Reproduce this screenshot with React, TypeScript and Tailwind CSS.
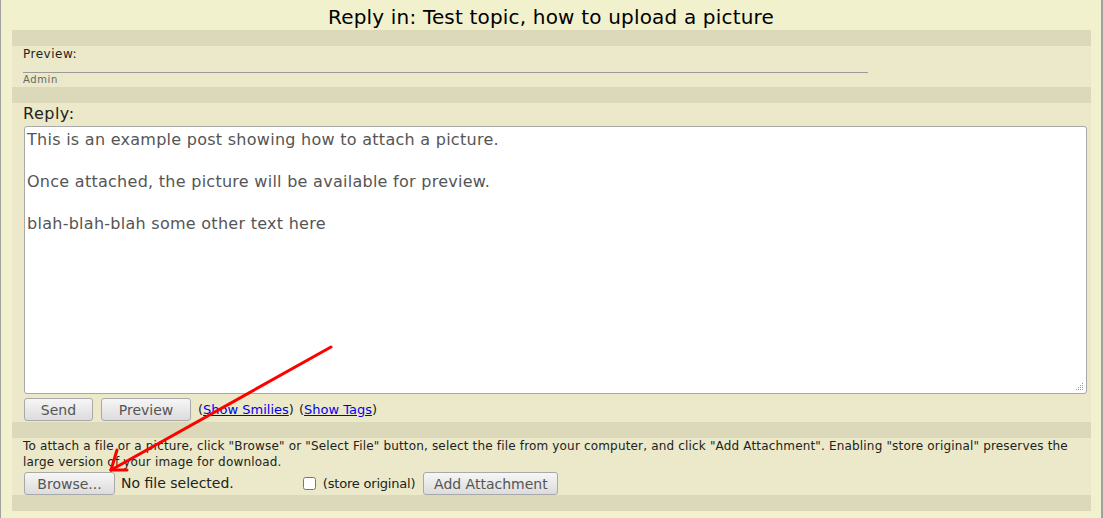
import React from 'react';

const font = { fontFamily: '"DejaVu Sans", Verdana, sans-serif' };

function Stripe() {
  return <div className="h-[16px] bg-[#dbd9b9]" />;
}

function Btn({ children, className = '' }: { children: React.ReactNode; className?: string }) {
  return (
    <button
      type="button"
      className={`h-[23px] rounded-[3px] border border-[#a9a9a9] bg-gradient-to-b from-[#f6f6f6] to-[#dcdcdc] text-[14px] leading-none text-[#555] ${className}`}
    >
      {children}
    </button>
  );
}

export default function App() {
  return (
    <div
      style={font}
      className="relative h-[518px] w-full overflow-hidden border-l border-r-2 border-[#a0a0a0] bg-[#f2f1ce] text-[#111]"
    >
      {/* title */}
      <div className="flex h-[30px] items-center justify-center pt-[3px] text-[20px] leading-none tracking-[0.18px] text-black">
        Reply in: Test topic, how to upload a picture
      </div>

      <div className="ml-[11px] mr-[10px] bg-[#ebe9c9]">
        <Stripe />

        {/* preview */}
        <div className="h-[41px] pl-[11px]">
          <div className="text-[12px] leading-[17px] tracking-[0.5px] text-[#222]">Preview:</div>
          <div className="mt-[9px] h-px w-[845px] bg-[#9a9a9a]" />
          <div className="text-[10px] leading-[13px] tracking-[0.6px] text-[#666]">Admin</div>
        </div>

        <Stripe />

        {/* reply */}
        <div className="h-[319px] pl-[11px]">
          <div className="text-[16px] leading-[21px] tracking-[0.5px] text-[#222]">Reply:</div>
          <div className="relative ml-px mt-[2px] h-[268px] w-[1063px] rounded-[3px] border border-[#a8a8a8] bg-white px-[2px] pt-[2px] text-[16px] leading-[21px] tracking-[0.27px] text-[#555]">
            <p>This is an example post showing how to attach a picture.</p>
            <p className="mt-[21px]">Once attached, the picture will be available for preview.</p>
            <p className="mt-[21px]">blah-blah-blah some other text here</p>
            <svg className="absolute bottom-[2px] right-[2px]" width="8" height="8" viewBox="0 0 8 8">
              {[
                [6, 0],
                [4, 2],
                [6, 2],
                [2, 4],
                [4, 4],
                [6, 4],
                [0, 6],
                [2, 6],
                [4, 6],
                [6, 6],
              ].map(([x, y]) => (
                <rect key={`${x}-${y}`} x={x} y={y} width="1" height="1" fill="#999" />
              ))}
            </svg>
          </div>
          <div className="mt-[4px] flex items-center text-[13px]">
            <Btn className="ml-px w-[69px]">Send</Btn>
            <Btn className="ml-[8px] w-[90px]">Preview</Btn>
            <span className="ml-[7px] text-[#222]">
              (<a className="text-[#0000ee] underline">Show Smilies</a>)
            </span>
            <span className="ml-[5px] text-[#222]">
              (<a className="text-[#0000ee] underline">Show Tags</a>)
            </span>
          </div>
        </div>

        <Stripe />

        {/* attachment */}
        <div className="h-[57px] pl-[11px] pr-[10px]">
          <div className="text-[12px] leading-[16px] tracking-[0.17px] text-[#222]">
            To attach a file or a picture, click "Browse" or "Select File" button, select the file from your computer, and click "Add Attachment". Enabling "store original" preserves the large version of your image for download.
          </div>
          <div className="mt-[2px] flex items-center">
            <Btn className="ml-px h-[22px] w-[91px]">Browse...</Btn>
            <span className="ml-[6px] text-[14px] text-[#222]">No file selected.</span>
            <input type="checkbox" className="ml-[69px] h-[13px] w-[13px]" />
            <span className="ml-[7px] text-[13px] tracking-[-0.2px] text-[#222]">(store original)</span>
            <Btn className="ml-[8px] h-[22px] w-[135px]">Add Attachment</Btn>
          </div>
        </div>

        <Stripe />
      </div>

      {/* annotation arrow */}
      <svg className="pointer-events-none absolute left-0 top-0" width="1103" height="518">
        <g stroke="#ff0000" strokeWidth="3" fill="none" strokeLinecap="round">
          <line x1="330" y1="347" x2="110" y2="470" />
          <line x1="110" y1="470" x2="116" y2="450" />
          <line x1="110" y1="470" x2="126" y2="470" />
        </g>
      </svg>
    </div>
  );
}
